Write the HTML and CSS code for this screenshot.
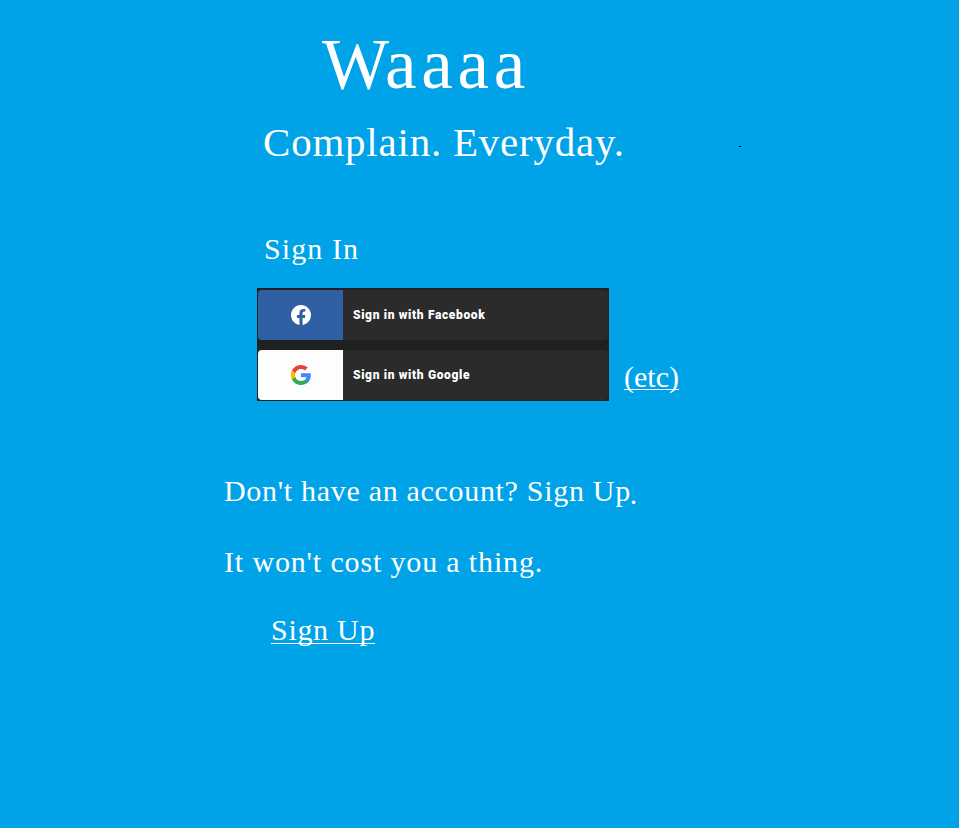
FILE: index.html
```html
<!DOCTYPE html>
<html lang="en">
<head>
<meta charset="utf-8">
<title>Waaaa</title>
<link rel="stylesheet" href="styles.css">
</head>
<body>
<main class="page">
  <h1 class="title">W<span class="title-tail">aaaa</span></h1>
  <p class="tagline">Complain. Everyday.</p>
  <span class="speck"></span>
  <h2 class="heading">Sign In</h2>
  <div class="providers-row">
    <div class="providers">
      <a class="provider">
        <span class="logo facebook">
          <svg width="20" height="20" viewBox="0 0 24 24"><path fill="#fff" d="M24 12.07C24 5.4 18.63 0 12 0S0 5.4 0 12.07c0 6.03 4.39 11.02 10.13 11.93v-8.44H7.08v-3.49h3.05V9.41c0-3.02 1.79-4.69 4.53-4.69 1.31 0 2.68.24 2.68.24v2.97h-1.51c-1.49 0-1.96.93-1.96 1.89v2.25h3.33l-.53 3.49h-2.8V24C19.61 23.09 24 18.1 24 12.07z"/></svg>
        </span>
        <span class="label">Sign in with Facebook</span>
      </a>
      <a class="provider">
        <span class="logo google">
          <svg width="20" height="20" viewBox="0 0 48 48"><path fill="#4285F4" d="M47.5 24.6c0-1.6-.2-3.2-.4-4.6H24v9.1h13.2c-.6 3-2.3 5.5-4.9 7.2v6h7.9c4.6-4.2 7.3-10.5 7.3-17.7z"/><path fill="#34A853" d="M24 48c6.5 0 12-2.1 16.2-5.8l-7.9-6c-2.2 1.5-5 2.3-8.3 2.3-6.4 0-11.7-4.2-13.6-9.9H2.3v6.2C6.400 42.900 14.600 48 24 48z"/><path fill="#FBBC05" d="M10.400 28.600a14.500 14.500 0 0 1 0-9.200v-6.200H2.300a24 24 0 0 0 0 21.600z"/><path fill="#EA4335" d="M24 9.500c3.500 0 6.700 1.200 9.200 3.600l6.900-6.900C35.900 2.400 30.500 0 24 0 14.600 0 6.400 5.100 2.300 13.200l8.100 6.200C12.300 13.700 17.600 9.500 24 9.500z"/></svg>
        </span>
        <span class="label">Sign in with Google</span>
      </a>
    </div>
    <a class="etc">(etc)</a>
  </div>
  <p class="copy account">Don't have an account? Sign Up<span class="stop">.</span></p>
  <p class="copy cost">It won't cost you a thing.</p>
  <a class="signup">Sign Up</a>
</main>
</body>
</html>
```

FILE: styles.css
```css
* { box-sizing: border-box; }
body {
  margin: 0;
  background: #00a2e8;
  color: #fff;
  font-family: "Century Schoolbook", "C059", "Century Schoolbook L", "Liberation Serif", serif;
}
.page {
  position: relative;
  display: flex;
  flex-direction: column;
  align-items: flex-start;
  min-height: 828px;
  padding: 24px 0 0 224px;
}
h1, h2, p { margin: 0; font-weight: 400; white-space: nowrap; }
.title { margin-left: 98px; font-size: 71px; line-height: 80px; letter-spacing: -4px; }
.title-tail { letter-spacing: 4.7px; }
.tagline { margin: 13px 0 0 39px; font-size: 41px; line-height: 50px; letter-spacing: .78px; }
.speck { position: absolute; left: 739px; top: 146px; width: 2px; height: 1px; background: #000; }
.heading {
  height: 34px;
  margin: 61px 0 0 40px;
  font-size: 30px;
  line-height: 41px;
  letter-spacing: 1.1px;
}
.providers-row { display: flex; align-items: flex-end; gap: 15px; margin: 26px 0 0 33px; }
.providers {
  display: flex;
  flex-direction: column;
  gap: 10px;
  width: 352px;
  height: 113px;
  padding: 2px 1px 1px;
  background: #202020;
}
.provider {
  display: flex;
  align-items: center;
  height: 50px;
  overflow: hidden;
  border-radius: 4px;
  background: #2b2b2b;
}
.logo { display: flex; align-items: center; justify-content: center; width: 85px; height: 50px; }
.logo svg { display: block; }
.facebook { background: #3060a4; }
.google { background: #fdfdfd; }
.label {
  margin-left: 10px;
  font: 900 12px/16px Roboto, sans-serif;
  letter-spacing: .65px;
}
.etc {
  height: 34px;
  margin-bottom: 11px;
  border-bottom: 1px solid #fff;
  font-size: 30px;
  line-height: 41px;
}
.copy { font-size: 30px; line-height: 40px; }
.account { margin-top: 70px; letter-spacing: .69px; }
.stop { position: relative; left: -1px; top: 3px; }
.cost { margin-top: 31px; letter-spacing: .85px; }
.signup {
  height: 34px;
  margin: 28px 0 0 47px;
  border-bottom: 1px solid #fff;
  font-size: 30px;
  line-height: 40px;
  letter-spacing: .7px;
}
```
